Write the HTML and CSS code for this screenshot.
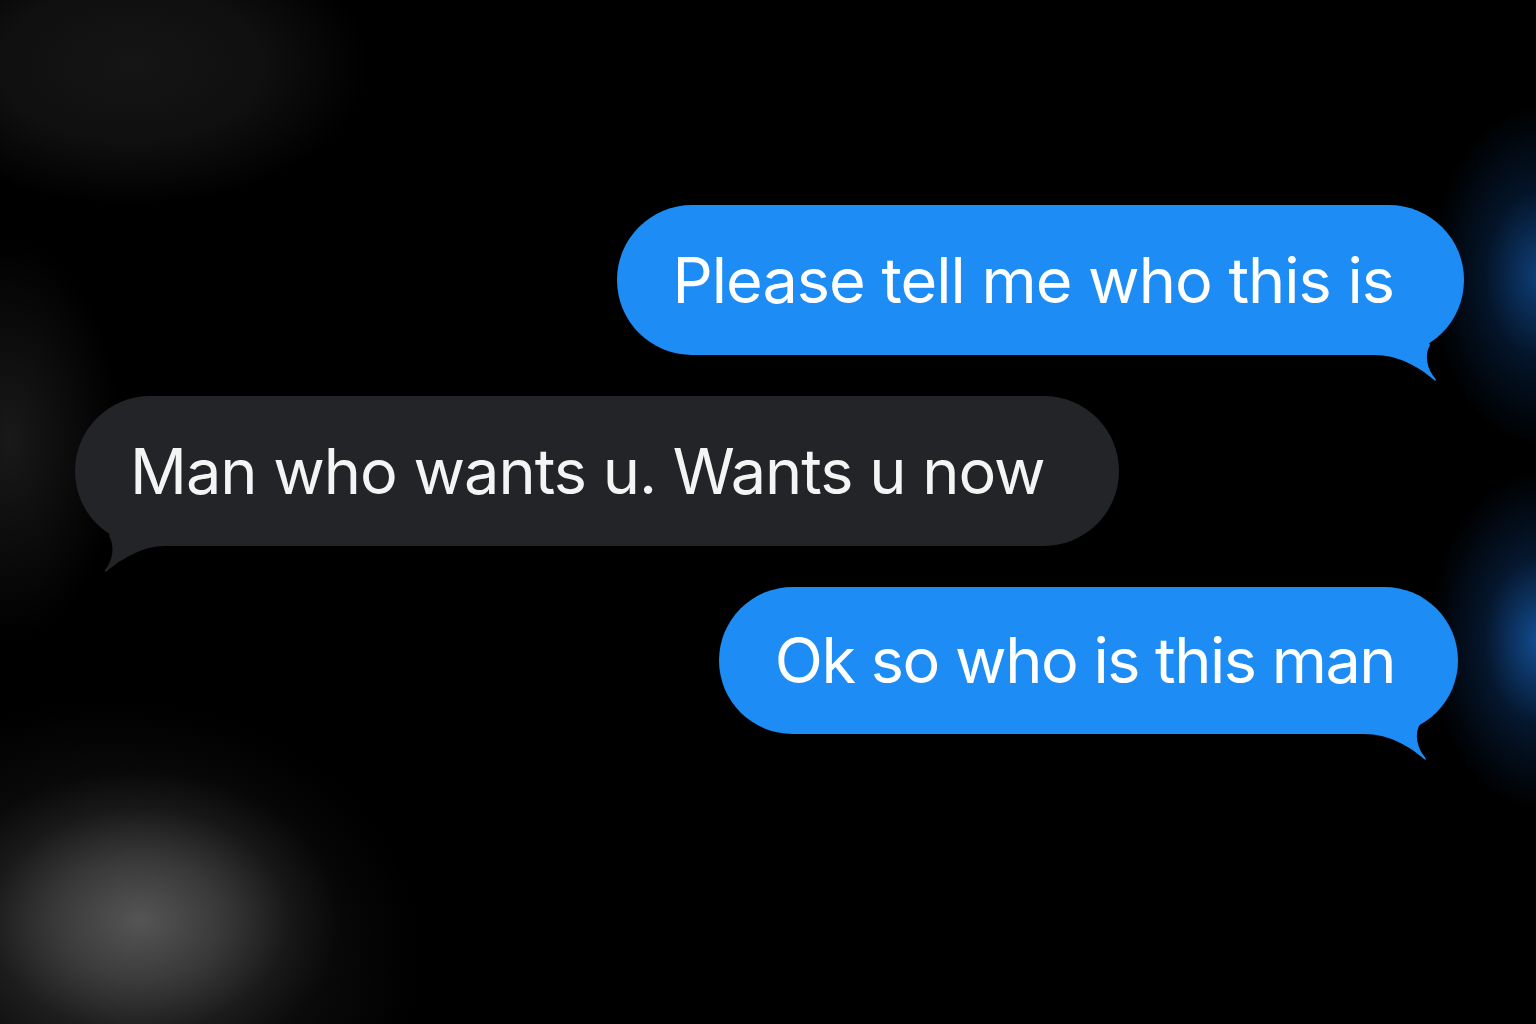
FILE: index.html
```html
<!DOCTYPE html>
<html lang="en">
<head>
<meta charset="utf-8">
<title>Messages</title>
<link rel="stylesheet" href="styles.css">
</head>
<body>
<main class="thread">
  <div class="row out">
    <div class="bubble blue">
      <span class="text">Please tell me who this is</span>
      <svg class="tail" viewBox="0 0 90 70" aria-hidden="true"><path d="M0 44 C25 44 45 56 60 69 C61.5 70.5 62.5 69.5 61.5 68 C53 58 50 44 56 34 L40 0 L0 0 Z"/></svg>
    </div>
  </div>
  <div class="row in">
    <div class="bubble gray">
      <span class="text">Man who wants u. Wants u now</span>
      <svg class="tail" viewBox="0 0 90 70" aria-hidden="true"><path d="M0 44 C22 44 42 56 58 69 C59.5 70.5 61 69.5 60 68 C52 58 50 44 56 34 L40 0 L0 0 Z"/></svg>
    </div>
  </div>
  <div class="row out">
    <div class="bubble blue third">
      <span class="text">Ok so who is this man</span>
      <svg class="tail" viewBox="0 0 90 70" aria-hidden="true"><path d="M0 44 C25 44 45 56 60 69 C61.5 70.5 62.5 69.5 61.5 68 C53 58 50 44 56 34 L40 0 L0 0 Z"/></svg>
    </div>
  </div>
</main>
</body>
</html>
```
FILE: styles.css
```css
html, body {
  margin: 0;
  padding: 0;
}

body {
  width: 1536px;
  height: 1024px;
  overflow: hidden;
  background-color: #000;
  background-image:
    radial-gradient(ellipse 200px 150px at 140px 920px, rgba(88,88,88,0.95) 0%, rgba(70,70,70,0.75) 40%, rgba(40,40,40,0.4) 75%, rgba(0,0,0,0) 100%),
    radial-gradient(ellipse 310px 260px at 110px 960px, rgba(45,45,45,0.7) 0%, rgba(30,30,30,0.4) 60%, rgba(0,0,0,0) 100%),
    radial-gradient(ellipse 240px 140px at 130px 65px, rgba(21,21,21,1) 0%, rgba(18,18,18,0.85) 55%, rgba(0,0,0,0) 100%),
    radial-gradient(ellipse 110px 200px at 10px 440px, rgba(28,28,28,0.9) 0%, rgba(0,0,0,0) 100%),
    radial-gradient(ellipse 110px 170px at 1540px 275px, rgba(16,70,135,0.9) 0%, rgba(8,40,80,0.5) 50%, rgba(0,0,0,0) 100%),
    radial-gradient(ellipse 110px 170px at 1540px 640px, rgba(20,82,155,0.95) 0%, rgba(10,45,90,0.5) 50%, rgba(0,0,0,0) 100%);
  font-family: Inter, "Noto Sans", "DejaVu Sans", sans-serif;
}

.thread {
  display: flex;
  flex-direction: column;
  gap: 41px;
  padding: 205px 72px 0 75px;
}

.row {
  display: flex;
}

.row.out {
  justify-content: flex-end;
}

.row.in {
  justify-content: flex-start;
}

.bubble {
  position: relative;
  box-sizing: border-box;
  height: 150px;
  border-radius: 75px;
  display: flex;
  align-items: center;
  padding: 0 70px 0 56px;
  font-size: 63px;
  line-height: 1;
  letter-spacing: -1px;
  color: #fff;
}

.bubble .text {
  position: relative;
  z-index: 1;
  white-space: nowrap;
}

.blue {
  background: #1d8cf4;
}

.blue .tail path {
  fill: #1d8cf4;
}

.gray {
  background: #222428;
  color: #f4f4f4;
  padding-left: 55px;
  padding-right: 74px;
}

.gray .tail path {
  fill: #222428;
}

.third {
  height: 147px;
  margin-right: 6px;
  padding-right: 63px;
  letter-spacing: -1.5px;
}

.tail {
  position: absolute;
  top: 106px;
  right: 0;
  width: 90px;
  height: 70px;
  overflow: visible;
}

.gray .tail {
  right: auto;
  left: 0;
  transform: scaleX(-1);
}

.third .tail {
  top: 103px;
  right: 4px;
}
```
